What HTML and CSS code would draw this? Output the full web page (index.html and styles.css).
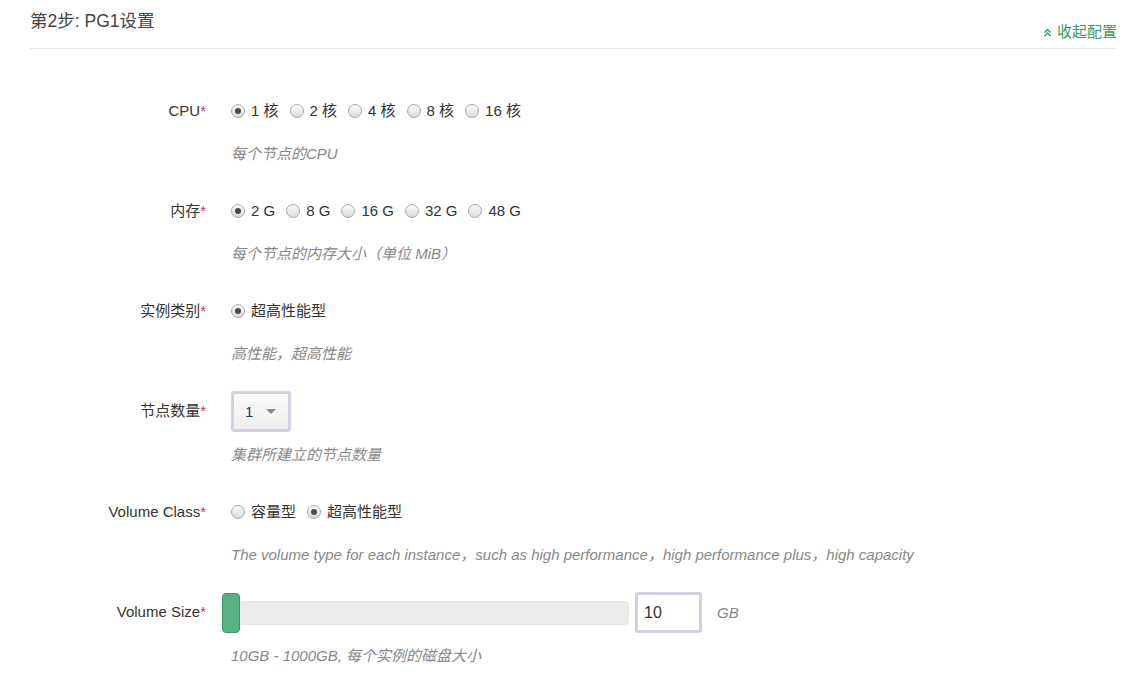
FILE: index.html
```html
<!DOCTYPE html>
<html lang="zh">
<head>
<meta charset="utf-8">
<title>PG1设置</title>
<link rel="stylesheet" href="styles.css">
</head>
<body>
<div class="panel">
  <div class="panel-head">
    <h3 class="panel-title">第2步: PG1设置</h3>
    <a class="collapse-link" href="#">
      <svg class="chev" width="9" height="9" viewBox="0 0 9 9" aria-hidden="true">
        <path d="M1.5 4.5 L4.5 1.5 L7.5 4.5 M1.5 8 L4.5 5 L7.5 8" fill="none" stroke="#3d9a5c" stroke-width="1.4"/>
      </svg>收起配置</a>
  </div>

  <div class="form">
    <div class="row">
      <div class="label">CPU<span class="req">*</span></div>
      <div class="field">
        <div class="control">
          <label class="opt"><span class="radio checked"></span>1 核</label>
          <label class="opt"><span class="radio"></span>2 核</label>
          <label class="opt"><span class="radio"></span>4 核</label>
          <label class="opt"><span class="radio"></span>8 核</label>
          <label class="opt"><span class="radio"></span>16 核</label>
        </div>
        <div class="help">每个节点的CPU</div>
      </div>
    </div>

    <div class="row">
      <div class="label">内存<span class="req">*</span></div>
      <div class="field">
        <div class="control">
          <label class="opt"><span class="radio checked"></span>2 G</label>
          <label class="opt"><span class="radio"></span>8 G</label>
          <label class="opt"><span class="radio"></span>16 G</label>
          <label class="opt"><span class="radio"></span>32 G</label>
          <label class="opt"><span class="radio"></span>48 G</label>
        </div>
        <div class="help">每个节点的内存大小（单位 MiB）</div>
      </div>
    </div>

    <div class="row">
      <div class="label">实例类别<span class="req">*</span></div>
      <div class="field">
        <div class="control">
          <label class="opt"><span class="radio checked"></span>超高性能型</label>
        </div>
        <div class="help">高性能，超高性能</div>
      </div>
    </div>

    <div class="row">
      <div class="label">节点数量<span class="req">*</span></div>
      <div class="field">
        <div class="control">
          <div class="select"><span class="select-val">1</span><span class="caret"></span></div>
        </div>
        <div class="help">集群所建立的节点数量</div>
      </div>
    </div>

    <div class="row">
      <div class="label">Volume Class<span class="req">*</span></div>
      <div class="field">
        <div class="control">
          <label class="opt"><span class="radio"></span>容量型</label>
          <label class="opt"><span class="radio checked"></span>超高性能型</label>
        </div>
        <div class="help">The volume type for each instance，such as high performance，high performance plus，high capacity</div>
      </div>
    </div>

    <div class="row">
      <div class="label">Volume Size<span class="req">*</span></div>
      <div class="field">
        <div class="control">
          <div class="slider">
            <div class="track"></div>
            <div class="handle"></div>
          </div>
          <div class="num-input">10</div>
          <span class="unit">GB</span>
        </div>
        <div class="help help-slider">10GB - 1000GB, 每个实例的磁盘大小</div>
      </div>
    </div>
  </div>
</div>
</body>
</html>
```

FILE: styles.css
```css
html, body {
  margin: 0;
  padding: 0;
  background: #fff;
}
body {
  font-family: "Liberation Sans", Arial, "Noto Sans CJK SC", sans-serif;
  font-size: 15px;
  color: #333;
}
.panel {
  padding: 0 25px 0 30px;
}
.panel-head {
  display: flex;
  justify-content: space-between;
  align-items: flex-start;
  height: 48px;
  border-bottom: 1px solid #e8e8e8;
}
.panel-title {
  margin: 0;
  padding-top: 10px;
  font-size: 17.5px;
  font-weight: normal;
  line-height: 22px;
  color: #444;
}
.collapse-link {
  margin-top: 22px;
  line-height: 20px;
  font-size: 15px;
  color: #3d9a5c;
  text-decoration: none;
  display: flex;
  align-items: center;
}
.chev {
  margin-right: 5px;
}
.form {
  padding-top: 42px;
}
.row {
  display: grid;
  grid-template-columns: 176px 1fr;
  column-gap: 25px;
  padding-bottom: 27px;
}
.label {
  text-align: right;
  line-height: 40px;
  height: 40px;
  color: #333;
}
.req {
  color: #c7355a;
}
.control {
  display: flex;
  align-items: center;
  min-height: 40px;
}
.opt {
  display: flex;
  align-items: center;
  margin-right: 11px;
  line-height: 20px;
  color: #333;
}
.radio {
  box-sizing: border-box;
  width: 14px;
  height: 14px;
  border-radius: 50%;
  border: 1px solid #a9a9a9;
  background: linear-gradient(#fdfdfd, #d9d9d9);
  margin: 0 6px 0 0;
  position: relative;
  flex: none;
}
.radio.checked::after {
  content: "";
  position: absolute;
  left: 3px;
  top: 3px;
  width: 6px;
  height: 6px;
  border-radius: 50%;
  background: #4a4a4a;
}
.help {
  margin-top: 13px;
  line-height: 20px;
  height: 20px;
  font-style: italic;
  color: #888;
  white-space: nowrap;
}
.select {
  box-sizing: border-box;
  width: 60px;
  height: 41px;
  margin-left: 0;
  border: 3px solid #d3d0e2;
  border-radius: 3px;
  background: linear-gradient(#fafafa, #eeeeee);
  display: flex;
  align-items: center;
  padding-left: 11px;
}
.select-val {
  color: #1a3a5a;
  width: 21px;
}
.caret {
  width: 0;
  height: 0;
  border-left: 5px solid transparent;
  border-right: 5px solid transparent;
  border-top: 5px solid #888;
}
.slider {
  position: relative;
  width: 407px;
  height: 40px;
  margin-left: -9px;
  display: flex;
  align-items: center;
}
.track {
  box-sizing: border-box;
  margin-left: 16px;
  width: 391px;
  height: 24px;
  background: #ececec;
  border: 1px solid #e4e4e4;
  border-radius: 4px;
}
.handle {
  position: absolute;
  left: 0;
  top: 0;
  box-sizing: border-box;
  width: 18px;
  height: 40px;
  background: #57b482;
  border: 1px solid #3e9566;
  border-radius: 4px;
}
.num-input {
  box-sizing: border-box;
  width: 67px;
  height: 41px;
  margin-left: 6px;
  border: 3px solid #d3d0e2;
  border-radius: 3px;
  padding-left: 6px;
  line-height: 35px;
  font-size: 16px;
  color: #333;
}
.unit {
  margin-left: 15px;
  font-style: italic;
  color: #888;
}
```
